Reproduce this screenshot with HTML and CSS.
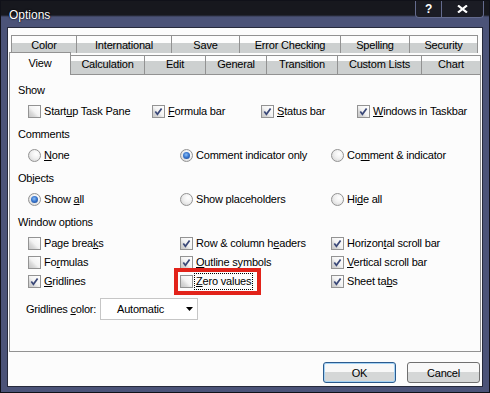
FILE: index.html
```html
<!DOCTYPE html>
<html lang="en">
<head>
    <meta charset="UTF-8">
    <title>Options</title>
    <link rel="stylesheet" href="styles.css">
</head>
<body>

<div class="window">
    <div class="titlebar">
        <span class="title">Options</span>
        <div class="caption-btns">
            <span class="cap-btn help">?</span>
            <span class="cap-btn close">
                <svg width="11" height="8" viewBox="0 0 11 8"><path d="M1 0.5 L10 7.5 M10 0.5 L1 7.5"/></svg>
            </span>
        </div>
    </div>

    <div class="client">
        <div class="tabs tabs-back">
            <div class="tab">Color</div>
            <div class="tab">International</div>
            <div class="tab">Save</div>
            <div class="tab">Error Checking</div>
            <div class="tab">Spelling</div>
            <div class="tab">Security</div>
        </div>
        <div class="tabs tabs-front">
            <div class="tab active">View</div>
            <div class="tab">Calculation</div>
            <div class="tab">Edit</div>
            <div class="tab">General</div>
            <div class="tab">Transition</div>
            <div class="tab">Custom Lists</div>
            <div class="tab">Chart</div>
        </div>

        <div class="panel">
            <div class="heading">Show</div>
            <div class="opts show-row">
                <label class="opt"><span class="box"></span><span>Start<u>u</u>p Task Pane</span></label>
                <label class="opt"><span class="box"><svg class="tick" viewBox="0 0 11 11"><path d="M2.3 5.6 L4.4 8.3 L8.6 2.4"/></svg></span><span><u>F</u>ormula bar</span></label>
                <label class="opt"><span class="box"><svg class="tick" viewBox="0 0 11 11"><path d="M2.3 5.6 L4.4 8.3 L8.6 2.4"/></svg></span><span><u>S</u>tatus bar</span></label>
                <label class="opt"><span class="box"><svg class="tick" viewBox="0 0 11 11"><path d="M2.3 5.6 L4.4 8.3 L8.6 2.4"/></svg></span><span><u>W</u>indows in Taskbar</span></label>
            </div>

            <div class="heading">Comments</div>
            <div class="opts three-col">
                <label class="opt"><span class="radio"></span><span><u>N</u>one</span></label>
                <label class="opt"><span class="radio on"></span><span>Comment indicator only</span></label>
                <label class="opt"><span class="radio"></span><span>Co<u>m</u>ment &amp; indicator</span></label>
            </div>

            <div class="heading">Objects</div>
            <div class="opts three-col">
                <label class="opt"><span class="radio on"></span><span>Show <u>a</u>ll</span></label>
                <label class="opt"><span class="radio"></span><span>Show placeholders</span></label>
                <label class="opt"><span class="radio"></span><span>Hi<u>d</u>e all</span></label>
            </div>

            <div class="heading">Window options</div>
            <div class="opts three-col">
                <label class="opt"><span class="box"></span><span>Page brea<u>k</u>s</span></label>
                <label class="opt"><span class="box"><svg class="tick" viewBox="0 0 11 11"><path d="M2.3 5.6 L4.4 8.3 L8.6 2.4"/></svg></span><span>Row &amp; column h<u>e</u>aders</span></label>
                <label class="opt"><span class="box"><svg class="tick" viewBox="0 0 11 11"><path d="M2.3 5.6 L4.4 8.3 L8.6 2.4"/></svg></span><span>Horizon<u>t</u>al scroll bar</span></label>

                <label class="opt"><span class="box"></span><span>Fo<u>r</u>mulas</span></label>
                <label class="opt"><span class="box"><svg class="tick" viewBox="0 0 11 11"><path d="M2.3 5.6 L4.4 8.3 L8.6 2.4"/></svg></span><span><u>O</u>utline symbols</span></label>
                <label class="opt"><span class="box"><svg class="tick" viewBox="0 0 11 11"><path d="M2.3 5.6 L4.4 8.3 L8.6 2.4"/></svg></span><span><u>V</u>ertical scroll bar</span></label>

                <label class="opt"><span class="box"><svg class="tick" viewBox="0 0 11 11"><path d="M2.3 5.6 L4.4 8.3 L8.6 2.4"/></svg></span><span><u>G</u>ridlines</span></label>
                <label class="opt zero"><span class="box"></span><span class="focus"><u>Z</u>ero values</span><span class="callout"></span></label>
                <label class="opt"><span class="box"><svg class="tick" viewBox="0 0 11 11"><path d="M2.3 5.6 L4.4 8.3 L8.6 2.4"/></svg></span><span>Sheet ta<u>b</u>s</span></label>
            </div>

            <div class="color-row">
                <span class="color-label">Gridlines <u>c</u>olor:</span>
                <div class="dropdown">
                    <span>Automatic</span>
                    <svg class="arrow" width="7" height="4" viewBox="0 0 7 4"><path d="M0 0 H7 L3.5 4 Z"/></svg>
                </div>
            </div>
        </div>

        <div class="buttons">
            <button class="btn default">OK</button>
            <button class="btn">Cancel</button>
        </div>
    </div>
</div>

</body>
</html>
```

FILE: styles.css
```css
html, body {
    margin: 0;
    padding: 0;
}

body {
    font-family: "Liberation Sans", Arial, sans-serif;
    font-size: 11px;
    letter-spacing: -0.2px;
    color: #000;
    background-color: #4b5378;
}

.window {
    width: 490px;
    height: 393px;
    box-sizing: border-box;
    border: 1px solid #101119;
    background-color: #4b5378;
    padding: 0 6px 5px;
    display: flex;
    flex-direction: column;
}

/* title bar */
.titlebar {
    height: 26px;
    margin: 0 -6px;
    display: flex;
    align-items: flex-start;
    background: linear-gradient(#17181e 0, #17181e 14px, #4b5378 16px);
}

.title {
    color: white;
    font-size: 12px;
    letter-spacing: 0;
    line-height: 14px;
    padding: 7px 0 0 8px;
    text-shadow: 0 0 2px #000, 0 0 1px #000;
}

.caption-btns {
    margin-left: auto;
    margin-right: 5px;
    display: flex;
    height: 16px;
    border: 1px solid #646b8e;
    border-top: 0;
    border-radius: 0 0 4px 4px;
    background-color: #1b1c24;
}

.cap-btn {
    display: flex;
    align-items: center;
    justify-content: center;
    color: white;
}

.help {
    width: 25px;
    font-weight: bold;
    font-size: 12px;
}

.close {
    width: 41px;
    border-left: 1px solid #646b8e;
}

.close svg path {
    stroke: white;
    stroke-width: 2.2;
}

/* client area */
.client {
    flex: 1;
    background-color: #fcfcfc;
    border: 1px solid #262a3c;
    padding-top: 7px;
    display: flex;
    flex-direction: column;
}

.tabs {
    display: grid;
}

.tabs-back {
    margin-left: 3px;
    height: 18px;
    grid-template-columns: 65px 95px 68px 101px 69px 69px;
}

.tabs-front {
    margin: -1px 0 0 1px;
    height: 22px;
    align-items: end;
    grid-template-columns: 62px 73px 61px 61px 71px 84px 60px;
}

.tab {
    box-sizing: border-box;
    border: 1px solid #929292;
    border-width: 1px 0 0 1px;
    text-align: center;
    line-height: 13px;
}

.tab:last-child {
    border-right-width: 1px;
}

.tabs-back .tab {
    height: 18px;
    padding-top: 3px;
    background: linear-gradient(#fdfdfd 7px, #cdd0d0 7px);
}

.tabs-front .tab {
    height: 19px;
    padding-top: 2px;
    background: linear-gradient(#fdfdfd 5px, #cdd0d0 5px);
}

.tabs-front .tab.active {
    position: relative;
    z-index: 1;
    height: 23px;
    margin-bottom: -1px;
    padding-top: 4px;
    border-right-width: 1px;
    background: #fcfcfc;
}

.tabs-front .active + .tab {
    border-left-width: 0;
}

/* tab page */
.panel {
    margin: 0 1px;
    height: 278px;
    box-sizing: border-box;
    border: 1px solid #929292;
    background-color: #fcfcfc;
    padding: 9px 8px 0;
}

.heading {
    line-height: 13px;
}

.opts {
    display: grid;
    margin: 8px 0 10px 10px;
    line-height: 13px;
}

.show-row {
    grid-template-columns: 124px 109px 96px auto;
}

.three-col {
    grid-template-columns: 152px 151px auto;
    row-gap: 6px;
}

.opt {
    display: flex;
    align-items: center;
    gap: 3px;
    white-space: nowrap;
}

u {
    text-underline-offset: 1px;
}

.box {
    width: 13px;
    height: 13px;
    box-sizing: border-box;
    border: 1px solid #939393;
    background: linear-gradient(45deg, #c6c6c6 0%, #dadada 30%, #f3f3f3 50%, #fff 100%);
    display: flex;
}

.tick {
    width: 11px;
    height: 11px;
}

.tick path {
    fill: none;
    stroke: #3a4878;
    stroke-width: 1.7;
}

.radio {
    width: 13px;
    height: 13px;
    box-sizing: border-box;
    border: 1px solid #939393;
    border-radius: 50%;
    background: radial-gradient(circle at 65% 35%, #fff 0%, #f0f0f0 45%, #cfcfcf 100%);
    display: flex;
    align-items: center;
    justify-content: center;
}

.radio.on::after {
    content: "";
    width: 7px;
    height: 7px;
    border-radius: 50%;
    background: radial-gradient(circle at 45% 40%, #8fc0f4 0, #3a78d0 45%, #1a3f84 100%);
}

/* zero values highlight */
.zero {
    position: relative;
}

.focus {
    outline: 1px dotted #000;
    outline-offset: 1px;
}

.callout {
    position: absolute;
    left: -6px;
    top: -7px;
    width: 87px;
    height: 27px;
    box-sizing: border-box;
    border: 4px solid #e2231a;
}

.color-row {
    display: flex;
    align-items: center;
    margin: 4px 0 0 8px;
}

.color-label {
    width: 74px;
}

.dropdown {
    width: 98px;
    height: 22px;
    box-sizing: border-box;
    border: 1px solid #c6c6c6;
    background-color: white;
    padding-left: 16px;
    display: flex;
    align-items: center;
}

.arrow {
    margin-left: auto;
    margin-right: 4px;
}

/* dialog buttons */
.buttons {
    display: flex;
    justify-content: flex-end;
    gap: 11px;
    margin: 10px 2px 0 0;
}

.btn {
    width: 73px;
    height: 21px;
    box-sizing: border-box;
    border: 1px solid #707070;
    border-radius: 3px;
    background: linear-gradient(#f8f8f8 50%, #d5d7d7 50%);
    font-family: "Liberation Sans", Arial, sans-serif;
    font-size: 11px;
    letter-spacing: -0.2px;
    color: #000;
    padding: 0;
}

.btn.default {
    border-color: #2b5b8e;
    box-shadow: inset 0 0 0 1px #a4d2f4;
}
```
